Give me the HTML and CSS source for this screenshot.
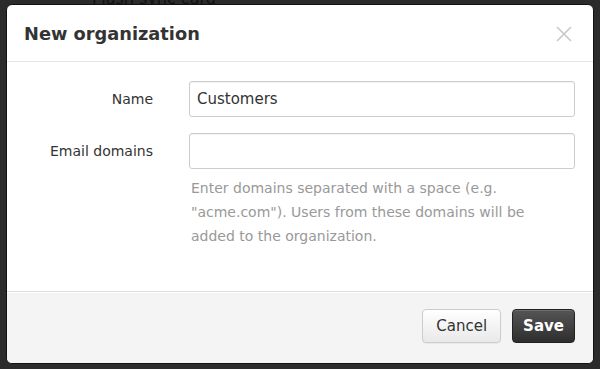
FILE: index.html
```html
<!DOCTYPE html>
<html lang="en">
<head>
  <meta charset="UTF-8">
  <title>New organization</title>
  <link rel="stylesheet" href="styles.css">
</head>
<body>
  <div class="backdrop-text">Flash sync card</div>
  <div class="modal">
    <div class="modal-header">
      <h3>New organization</h3>
      <button class="close" aria-label="Close">
        <svg width="16" height="16" viewBox="0 0 16 16"><path d="M1 1 L15 15 M15 1 L1 15" stroke="#c8c8c8" stroke-width="1.6" fill="none"/></svg>
      </button>
    </div>
    <div class="modal-body">
      <div class="form-grid">
        <label class="row-label" for="orgName">Name</label>
        <div class="row-input"><input id="orgName" type="text" value="Customers"></div>
        <label class="row-label" for="orgDomains">Email domains</label>
        <div class="row-input">
          <input id="orgDomains" type="text">
          <p class="help">Enter domains separated with a space (e.g. "acme.com"). Users from these domains will be added to the organization.</p>
        </div>
      </div>
    </div>
    <div class="modal-footer">
      <button class="btn">Cancel</button>
      <button class="btn btn-dark">Save</button>
    </div>
  </div>
</body>
</html>
```

FILE: styles.css
```css
html, body { height: 100%; }
body {
  margin: 0;
  padding: 4px 6px 5px;
  box-sizing: border-box;
  background: #2b2b2b;
  font-family: "DejaVu Sans", Arial, sans-serif;
  color: #333;
  overflow: hidden;
  position: relative;
}
.backdrop-text {
  position: absolute;
  top: -11px;
  left: 92px;
  font-size: 16px;
  color: #111;
}
.modal {
  position: relative;
  height: 100%;
  background: #fff;
  border: 1px solid #111;
  border-radius: 6px;
  box-sizing: border-box;
  display: flex;
  flex-direction: column;
  overflow: hidden;
}
.modal-header {
  height: 56px;
  flex: none;
  display: flex;
  align-items: center;
  justify-content: space-between;
  padding: 0 21px 0 17px;
  border-bottom: 1px solid #e5e5e5;
}
.modal-header h3 {
  margin: 0;
  font-size: 17.8px;
  font-weight: bold;
  color: #333;
  padding-top: 1px;
}
.close {
  border: none;
  background: none;
  padding: 0;
  cursor: pointer;
  display: flex;
  margin-top: 1px;
}
.modal-body {
  flex: 1;
  padding: 19px 18px 0 0;
}
.form-grid {
  display: grid;
  grid-template-columns: 146px 1fr;
  column-gap: 36px;
  row-gap: 16px;
}
.row-label {
  text-align: right;
  font-size: 14px;
  line-height: 36px;
  color: #333;
}
.row-input input {
  display: block;
  width: 100%;
  height: 36px;
  box-sizing: border-box;
  padding: 0 7px;
  border: 1px solid #ccc;
  border-radius: 3px;
  box-shadow: inset 0 1px 1px rgba(0,0,0,0.05);
  font-family: inherit;
  font-size: 15px;
  color: #333;
  outline: none;
}
.help {
  margin: 7px 0 0 2px;
  font-size: 14px;
  line-height: 24px;
  color: #999;
  padding-right: 30px;
}
.modal-footer {
  height: 72px;
  flex: none;
  box-sizing: border-box;
  background: #f4f4f4;
  border-top: 1px solid #ddd;
  box-shadow: inset 0 1px 0 #fff;
  display: flex;
  justify-content: flex-end;
  align-items: flex-start;
  gap: 11px;
  padding: 17px 18px 0;
}
.btn {
  height: 34px;
  padding: 0 13px;
  font-family: inherit;
  font-size: 15px;
  color: #333;
  background: linear-gradient(#fff, #e9e9e9);
  border: 1px solid #ccc;
  border-radius: 4px;
  box-shadow: inset 0 1px 0 #fff, 0 1px 1px rgba(0,0,0,0.05);
  cursor: pointer;
}
.btn-dark {
  padding: 0 10px;
  font-weight: bold;
  color: #fff;
  background: linear-gradient(#555, #2e2e2e);
  border-color: #222;
  box-shadow: inset 0 1px 0 rgba(255,255,255,0.15);
}
```
